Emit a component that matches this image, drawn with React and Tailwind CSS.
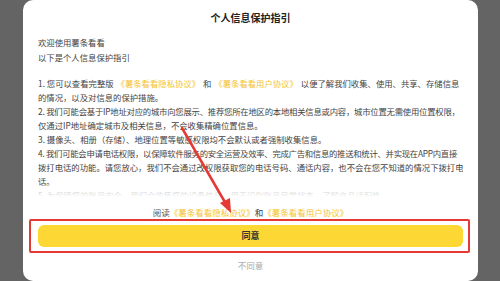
import React from 'react';

const Link = ({ children, className = '' }) => (
  <span className={`text-[#f4c430] ${className}`}>{children}</span>
);

const lines = [
  { t: <>1. 您可以查看完整版<Link className="mx-[3px]">《薯条看看隐私协议》</Link>和<Link className="mx-[3px]">《薯条看看用户协议》</Link>以便了解我们收集、使用、共享、存储信息</> },
  { t: <>的情况，以及对信息的保护措施。</> },
  { t: <>2. 我们可能会基于IP地址对应的城市向您展示、推荐您所在地区的本地相关信息或内容，城市位置无需使用位置权限，</>, c: 'tracking-[-0.22px]' },
  { t: <>仅通过IP地址确定城市及相关信息，不会收集精确位置信息。</> },
  { t: <>3. 摄像头、相册（存储）、地理位置等敏感权限均不会默认或者强制收集信息。</> },
  { t: <>4. 我们可能会申请电话权限，以保障软件服务的安全运营及效率、完成广告和信息的推送和统计、并实现在APP内直接</>, c: 'tracking-[-0.26px]' },
  { t: <>拨打电话的功能。请您放心，我们不会通过改权限获取您的电话号码、通话内容，也不会在您不知道的情况下拨打电</> },
  { t: <>话。</> },
  { t: <>5. 为保障您的账号安全，我们会收集您的设备信息，用于识别账号异常状态，了解产品适配性。</> },
];

function App() {
  return (
    <div
      className="relative w-[500px] h-[281px] bg-[#646464] overflow-hidden flex justify-center"
      style={{ fontFamily: '"Noto Sans CJK SC", "Noto Sans", sans-serif' }}
    >
      <div className="w-[455px] h-[281px] ml-[1px] bg-white rounded-[10px] flex flex-col px-[15px]">
        <div className="h-[35px] flex items-center justify-center text-[10px] font-bold text-[#222]">
          个人信息保护指引
        </div>

        <div className="relative h-[162px] overflow-hidden text-[8.35px] text-[#444]">
          <div className="leading-[15px]">
            <div>欢迎使用薯条看看</div>
            <div>以下是个人信息保护指引</div>
          </div>
          <div className="mt-[11px] leading-[14px]">
            {lines.map((l, i) => (
              <div key={i} className={`whitespace-nowrap ${l.c || ''}`}>{l.t}</div>
            ))}
          </div>
          <div className="absolute left-0 right-0 bottom-0 h-[12px] bg-gradient-to-b from-white/40 to-white" />
        </div>

        <div className="mt-[8px] leading-[14px] text-[8.5px] text-center text-[#555]">
          阅读<Link>《薯条看看隐私协议》</Link><span className="text-[#333]">和</span><Link>《薯条看看用户协议》</Link>
        </div>

        <div className="relative mt-[6px]">
          <button className="block w-full h-[22px] rounded-[6px] bg-[#fdd835] text-[9px] leading-[22px] font-bold text-[#333]">
            同意
          </button>
          <div className="absolute -left-[9px] -right-[7px] -top-[6px] -bottom-[6px] border-2 border-[#e53935] rounded-[2px]" />
        </div>

        <div className="mt-[11px] leading-[14px] text-[8.5px] text-center text-[#aaa]">不同意</div>
      </div>

      <svg className="absolute left-0 top-0" width="500" height="281" viewBox="0 0 500 281">
        <line x1="182" y1="128" x2="226" y2="204" stroke="#e53935" strokeWidth="2.5" strokeLinecap="round" />
        <polygon points="231,213 220,203 230,198" fill="#e53935" />
      </svg>
    </div>
  );
}

export default App;
